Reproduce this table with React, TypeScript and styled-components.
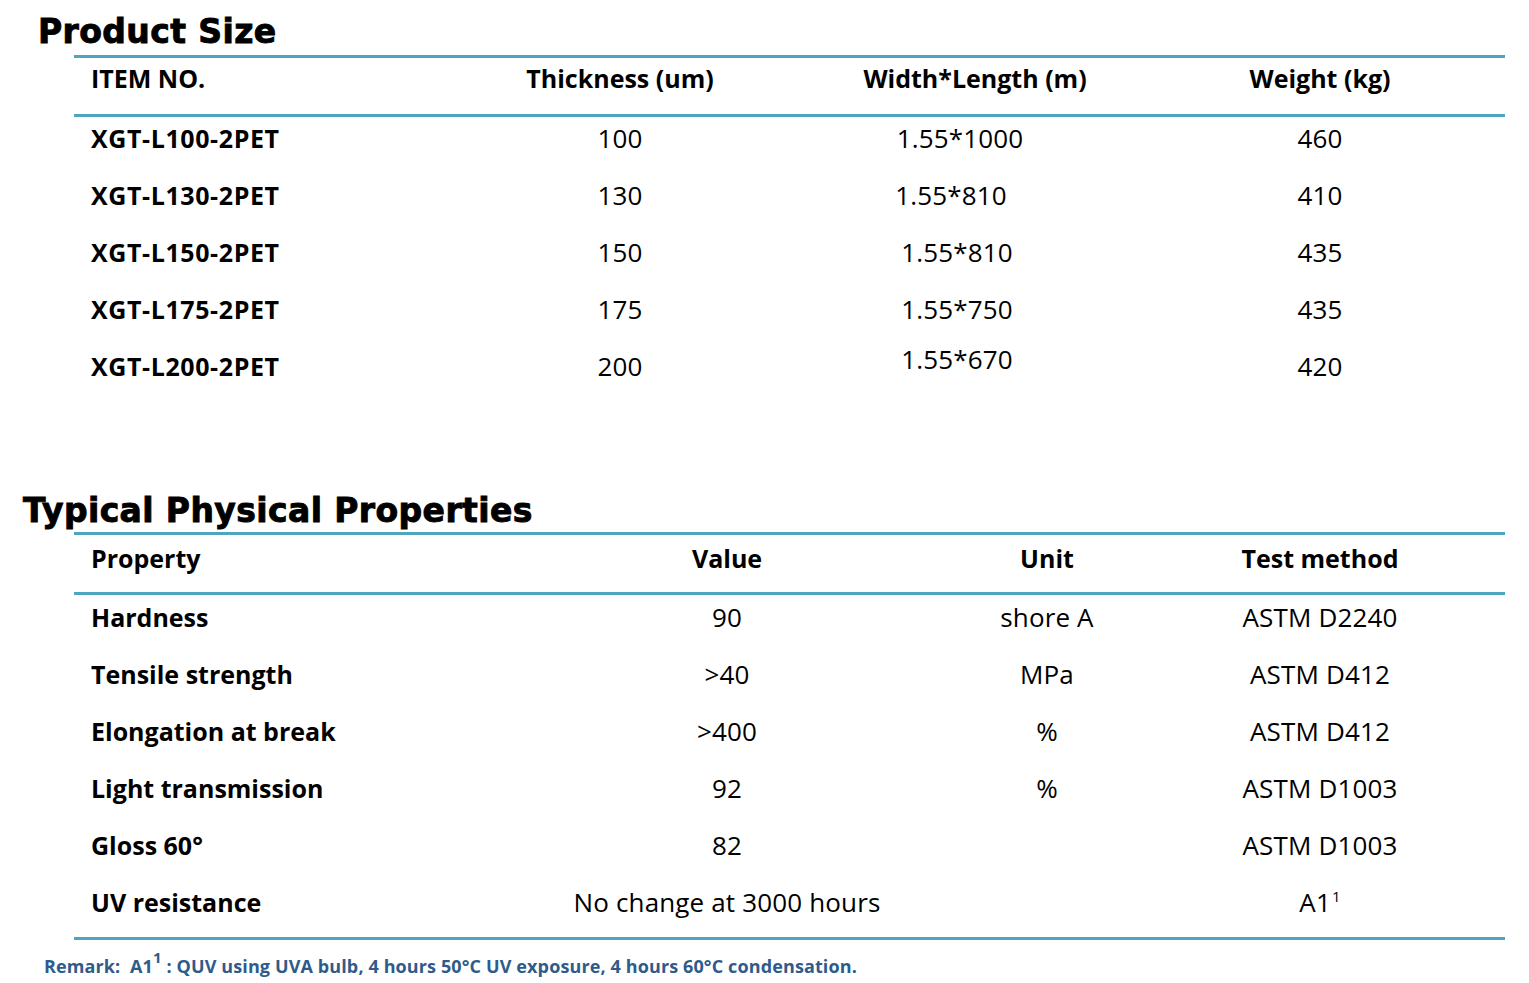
import React from "react";
import styled, { createGlobalStyle } from "styled-components";

const Global = createGlobalStyle`
  html, body { margin: 0; padding: 0; background: #ffffff; }
  body { font-family: "Open Sans", "Noto Sans", sans-serif; color: #000; }
`;

const Page = styled.div`
  width: 1529px;
  height: 983px;
  display: flex;
  flex-direction: column;
  padding-top: 12px;
  box-sizing: border-box;
  overflow: hidden;
`;

const Heading = styled.h2<{ $indent: number; $mt?: number }>`
  margin: ${(p) => p.$mt ?? 0}px 0 0 ${(p) => p.$indent}px;
  font-family: "DejaVu Sans", "Liberation Sans", sans-serif;
  font-weight: 700;
  font-size: 33px;
  line-height: 40px;
  letter-spacing: 0.4px;
  -webkit-text-stroke: 0.9px #000;
  color: #000;
`;

const Table = styled.div<{ $mt: number }>`
  margin: ${(p) => p.$mt}px 0 0 74px;
  width: 1431px;
  display: flex;
  flex-direction: column;
`;

const Rule = styled.div`
  height: 3px;
  background: #4ea5c0;
`;

const Row = styled.div<{ $cols: string; $h: number; $pt: number }>`
  display: grid;
  grid-template-columns: ${(p) => p.$cols};
  height: ${(p) => p.$h}px;
  padding-top: ${(p) => p.$pt}px;
  box-sizing: border-box;
  align-items: start;
`;

const Cell = styled.div<{ $bold?: boolean; $left?: boolean; $wide?: boolean; $dx?: number; $dy?: number }>`
  font-size: ${(p) => (p.$bold ? "25px" : "26px")};
  letter-spacing: ${(p) => (p.$wide ? "0.6px" : p.$bold ? "0" : "0.15px")};
  line-height: 30px;
  font-weight: ${(p) => (p.$bold ? 700 : 400)};
  text-align: ${(p) => (p.$left ? "left" : "center")};
  padding-left: ${(p) => (p.$left ? "17px" : "0")};
  white-space: nowrap;
  transform: translate(${(p) => p.$dx ?? 0}px, ${(p) => p.$dy ?? 0}px);
`;

const Sup = styled.sup`
  font-size: 15px;
  line-height: 0;
  vertical-align: 10px;
  margin-left: 1px;
`;

const Remark = styled.p`
  margin: 15px 0 0 44px;
  font-family: "Open Sans", "Noto Sans", sans-serif;
  font-weight: 700;
  font-size: 18px;
  letter-spacing: 0.12px;
  line-height: 22px;
  color: #2f5b8c;
  white-space: pre;
`;

const RemarkSup = styled.sup`
  font-size: 15px;
  line-height: 0;
  vertical-align: 10px;
`;

type SizeRow = [string, string, string, string, number, number];

const SIZE_COLS = "376px 340px 370px 320px 1fr";
const PROP_COLS = "486px 334px 306px 240px 1fr";

const sizes: SizeRow[] = [
  ["XGT-L100-2PET", "100", "1.55*1000", "460", -15, 0],
  ["XGT-L130-2PET", "130", "1.55*810", "410", -24, 0],
  ["XGT-L150-2PET", "150", "1.55*810", "435", -18, 0],
  ["XGT-L175-2PET", "175", "1.55*750", "435", -18, 0],
  ["XGT-L200-2PET", "200", "1.55*670", "420", -18, -7],
];

const props: [string, React.ReactNode, string, React.ReactNode][] = [
  ["Hardness", "90", "shore A", "ASTM D2240"],
  ["Tensile strength", ">40", "MPa", "ASTM D412"],
  ["Elongation at break", ">400", "%", "ASTM D412"],
  ["Light transmission", "92", "%", "ASTM D1003"],
  ["Gloss 60°", "82", "", "ASTM D1003"],
  [
    "UV resistance",
    "No change at 3000 hours",
    "",
    <>
      A1<Sup>1</Sup>
    </>,
  ],
];

export default function App() {
  return (
    <>
      <Global />
      <Page>
        <Heading $indent={38}>Product Size</Heading>
        <Table $mt={3}>
          <Rule />
          <Row $cols={SIZE_COLS} $h={56} $pt={5}>
            <Cell $bold $left>ITEM NO.</Cell>
            <Cell $bold>Thickness (um)</Cell>
            <Cell $bold>Width*Length (m)</Cell>
            <Cell $bold>Weight (kg)</Cell>
          </Row>
          <Rule />
          {sizes.map(([item, t, wl, w, dx, dy]) => (
            <Row key={item} $cols={SIZE_COLS} $h={57} $pt={6}>
              <Cell $bold $left $wide>{item}</Cell>
              <Cell>{t}</Cell>
              <Cell $dx={dx} $dy={dy}>{wl}</Cell>
              <Cell>{w}</Cell>
            </Row>
          ))}
        </Table>

        <Heading $indent={23} $mt={89}>Typical Physical Properties</Heading>
        <Table $mt={1}>
          <Rule />
          <Row $cols={PROP_COLS} $h={57} $pt={8}>
            <Cell $bold $left>Property</Cell>
            <Cell $bold>Value</Cell>
            <Cell $bold>Unit</Cell>
            <Cell $bold>Test method</Cell>
          </Row>
          <Rule />
          {props.map(([name, v, u, m]) => (
            <Row key={name} $cols={PROP_COLS} $h={57} $pt={7}>
              <Cell $bold $left>{name}</Cell>
              <Cell>{v}</Cell>
              <Cell>{u}</Cell>
              <Cell>{m}</Cell>
            </Row>
          ))}
          <Rule />
        </Table>
        <Remark>
          {"Remark:  A1"}
          <RemarkSup>1</RemarkSup>
          {" : QUV using UVA bulb, 4 hours 50°C UV exposure, 4 hours 60°C condensation."}
        </Remark>
      </Page>
    </>
  );
}
